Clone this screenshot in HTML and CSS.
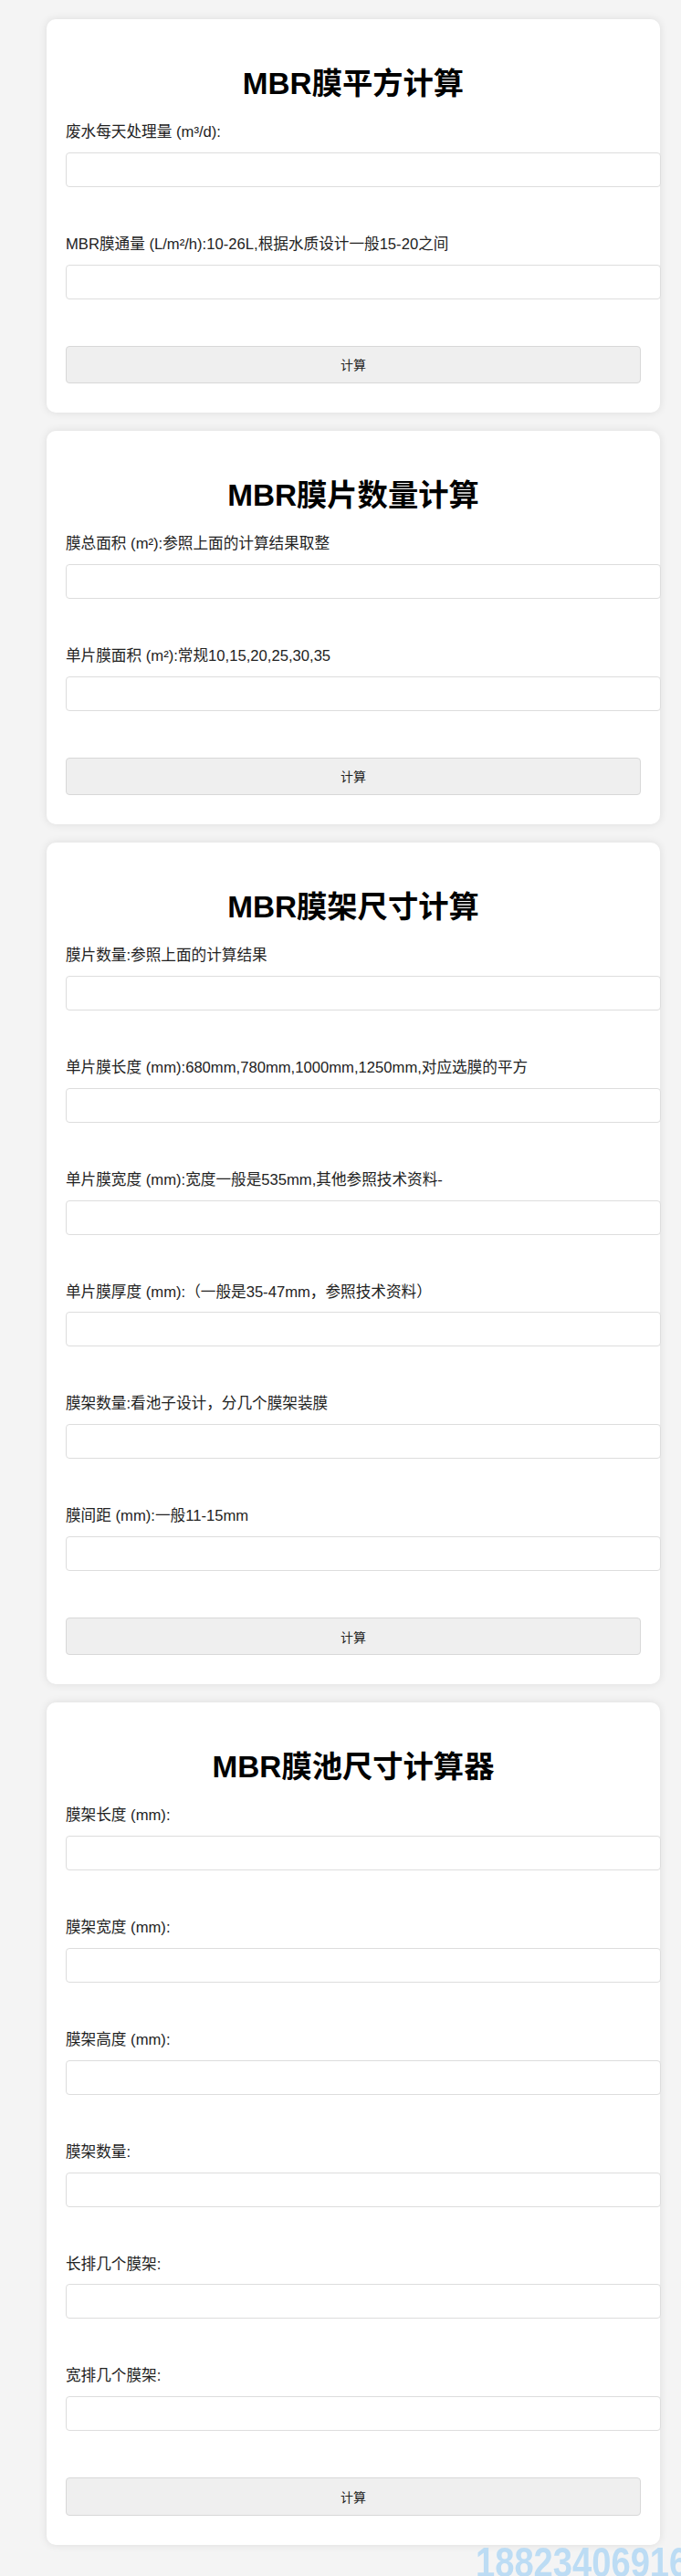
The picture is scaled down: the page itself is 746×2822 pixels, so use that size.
FILE: index.html
```html
<!DOCTYPE html>
<html lang="zh-CN">
<head>
<meta charset="utf-8">
<title>MBR膜计算</title>
<link rel="stylesheet" href="styles.css">
</head>
<body>
<main class="page">
  <section class="card">
    <h1 class="card-title">MBR膜平方计算</h1>
    <div class="field">
      <label>废水每天处理量 (m³/d):</label>
      <input type="text">
    </div>
    <div class="field">
      <label>MBR膜通量 (L/m²/h):10-26L,根据水质设计一般15-20之间</label>
      <input type="text">
    </div>
    <button class="calc-btn" type="button">计算</button>
  </section>

  <section class="card">
    <h1 class="card-title">MBR膜片数量计算</h1>
    <div class="field">
      <label>膜总面积 (m²):参照上面的计算结果取整</label>
      <input type="text">
    </div>
    <div class="field">
      <label>单片膜面积 (m²):常规10,15,20,25,30,35</label>
      <input type="text">
    </div>
    <button class="calc-btn" type="button">计算</button>
  </section>

  <section class="card">
    <h1 class="card-title">MBR膜架尺寸计算</h1>
    <div class="field">
      <label>膜片数量:参照上面的计算结果</label>
      <input type="text">
    </div>
    <div class="field">
      <label>单片膜长度 (mm):680mm,780mm,1000mm,1250mm,对应选膜的平方</label>
      <input type="text">
    </div>
    <div class="field">
      <label>单片膜宽度 (mm):宽度一般是535mm,其他参照技术资料-</label>
      <input type="text">
    </div>
    <div class="field">
      <label>单片膜厚度 (mm):（一般是35-47mm，参照技术资料）</label>
      <input type="text">
    </div>
    <div class="field">
      <label>膜架数量:看池子设计，分几个膜架装膜</label>
      <input type="text">
    </div>
    <div class="field">
      <label>膜间距 (mm):一般11-15mm</label>
      <input type="text">
    </div>
    <button class="calc-btn" type="button">计算</button>
  </section>

  <section class="card">
    <h1 class="card-title">MBR膜池尺寸计算器</h1>
    <div class="field">
      <label>膜架长度 (mm):</label>
      <input type="text">
    </div>
    <div class="field">
      <label>膜架宽度 (mm):</label>
      <input type="text">
    </div>
    <div class="field">
      <label>膜架高度 (mm):</label>
      <input type="text">
    </div>
    <div class="field">
      <label>膜架数量:</label>
      <input type="text">
    </div>
    <div class="field">
      <label>长排几个膜架:</label>
      <input type="text">
    </div>
    <div class="field">
      <label>宽排几个膜架:</label>
      <input type="text">
    </div>
    <button class="calc-btn" type="button">计算</button>
  </section>
</main>
<div class="watermark">18823406916</div>
</body>
</html>
```
FILE: styles.css
```css
html, body {
  margin: 0;
  padding: 0;
}

body {
  background: #f4f4f4;
  font-family: "Liberation Sans", Arial, "Noto Sans CJK SC", sans-serif;
  color: #222;
}

.page {
  padding: 21px 23px 0 51px;
}

.card {
  background: #fff;
  border-radius: 10px;
  box-shadow: 0 0 10px rgba(0, 0, 0, 0.1);
  padding: 21px;
  margin-bottom: 20px;
}

.card-title {
  font-size: 33.3px;
  line-height: 40px;
  font-weight: bold;
  color: #000;
  text-align: center;
  margin: 29.7px 0 21.3px;
}

.field {
  padding-top: 2px;
  margin-bottom: 51px;
}

.field label {
  display: block;
  font-size: 16.64px;
  line-height: 20px;
  margin: 0 0 11.8px;
  white-space: nowrap;
}

.field input {
  display: block;
  box-sizing: content-box;
  width: 100%;
  height: 36px;
  padding: 0 10px;
  margin: 0;
  border: 1px solid #ddd;
  border-radius: 4px;
  background: #fff;
  font-size: 16px;
  font-family: inherit;
}

.calc-btn {
  display: block;
  width: 100%;
  height: 41.5px;
  margin: 0 0 11px;
  background: #efefef;
  border: 1px solid #d8d8d8;
  border-radius: 4px;
  font-family: "Liberation Sans", Arial, "Noto Sans CJK SC", sans-serif;
  font-size: 14px;
  color: #222;
}

.watermark {
  position: fixed;
  left: 521px;
  bottom: -8px;
  font-family: "Liberation Sans", sans-serif;
  font-weight: bold;
  font-size: 46.5px;
  line-height: 46.5px;
  color: #bcdcf4;
  white-space: nowrap;
  transform: scaleX(0.82);
  transform-origin: left bottom;
}
```
